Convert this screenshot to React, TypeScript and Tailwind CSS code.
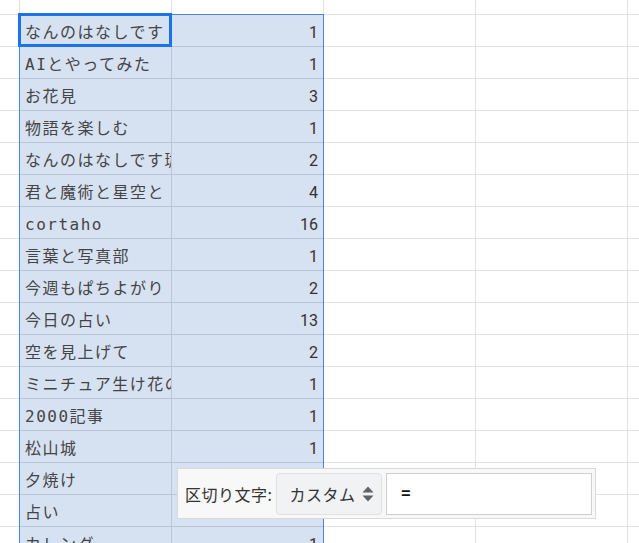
import React from "react";

// null count = value hidden behind the delimiter picker
const rows: [string, number | null][] = [
  ["なんのはなしです", 1],
  ["AIとやってみた", 1],
  ["お花見", 3],
  ["物語を楽しむ", 1],
  ["なんのはなしです珈琲", 2],
  ["君と魔術と星空と", 4],
  ["cortaho", 16],
  ["言葉と写真部", 1],
  ["今週もぱちよがり", 2],
  ["今日の占い", 13],
  ["空を見上げて", 2],
  ["ミニチュア生け花の世界", 1],
  ["2000記事", 1],
  ["松山城", 1],
  ["夕焼け", null],
  ["占い", null],
  ["カレンダー", 1],
];

const plain = "border-b border-r border-[#e2e2e2] bg-white";
const picked = "border-b border-r border-[#bcc6d3] bg-[#d6e2f2]";

const SortArrows = () => (
  <svg width="12" height="16" viewBox="0 0 12 16" fill="#5f6368">
    <path d="M6 0.5 L11.5 6.5 H0.5 Z" />
    <path d="M6 15.5 L11.5 9.5 H0.5 Z" />
  </svg>
);

const App = () => {
  return (
    <div className="relative w-[639px] h-[543px] overflow-hidden bg-white">
      <div className="grid grid-cols-[20px_152px_152px_152px_152px_1fr] grid-rows-[15px] auto-rows-[32px]">
        {/* header strip above the data */}
        <div className={plain} />
        <div className={plain} />
        <div className={plain} />
        <div className={plain} />
        <div className={plain} />
        <div className="border-b border-[#e2e2e2]" />

        {rows.map(([name, count], i) => (
          <React.Fragment key={i}>
            <div className={plain} />
            <div
              className={`${picked} flex items-end overflow-hidden whitespace-nowrap pl-[5px] pb-[3px] text-[16px] leading-[20px] tracking-[1.5px] text-[#444]`}
              style={{ fontFamily: '"DejaVu Sans Mono", "Noto Sans CJK JP", monospace' }}
            >
              {name}
            </div>
            <div
              className={`${picked} flex items-end justify-end pr-[5px] pb-[3px] text-[16px] leading-[20px] text-[#333]`}
              style={{ fontFamily: "Roboto, sans-serif" }}
            >
              {count ?? ""}
            </div>
            <div className={plain} />
            <div className={plain} />
            <div className="border-b border-[#e2e2e2]" />
          </React.Fragment>
        ))}
      </div>

      {/* selected range and active cell */}
      <div className="absolute left-[19px] top-[14px] w-[305px] h-[600px] border border-[#4a86e8]" />
      <div className="absolute left-[18px] top-[13px] w-[154px] h-[34px] border-[3px] border-[#1a73e8]" />

      {/* delimiter picker */}
      <div
        className="absolute left-[177px] top-[468px] w-[419px] h-[51px] flex items-center gap-[4px] pl-[7px] pr-[3px] bg-[#f8f8f8] border border-[#dadada]"
        style={{ fontFamily: '"Noto Sans CJK JP", sans-serif' }}
      >
        <span className="text-[16px] tracking-[0.5px] text-[#333] whitespace-nowrap">
          区切り文字:
        </span>
        <div className="flex items-center justify-between w-[106px] h-[42px] pl-[12px] pr-[7px] bg-[#f0f2f4] border border-[#e0e0e0] rounded-[4px]">
          <span className="text-[16px] tracking-[0.5px] text-[#333]">カスタム</span>
          <SortArrows />
        </div>
        <div className="flex-1 h-[42px] flex items-center pl-[13px] bg-white border border-[#cfcfcf]">
          <span className="text-[19px] font-medium text-[#111]" style={{ fontFamily: "Roboto, sans-serif" }}>
            =
          </span>
        </div>
      </div>
    </div>
  );
};

export default App;
